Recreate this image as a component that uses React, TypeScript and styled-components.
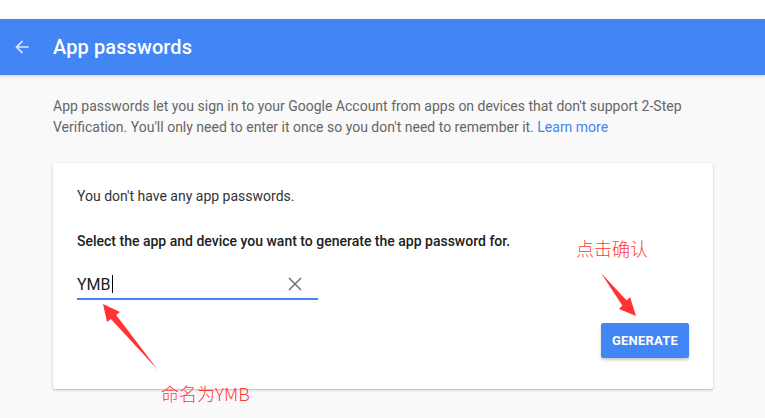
import React from "react";
import styled, { createGlobalStyle } from "styled-components";

const GlobalStyle = createGlobalStyle`
  html, body {
    margin: 0;
    padding: 0;
    background: #f9f9f9;
    font-family: Roboto, "Liberation Sans", Arial, sans-serif;
  }
`;

const Page = styled.div`
  position: relative;
  width: 765px;
  height: 418px;
  overflow: hidden;
  background: #f9f9f9;
`;

const TopStrip = styled.div`
  height: 19px;
  background: #ffffff;
`;

const Header = styled.header`
  height: 56px;
  background: #4285f4;
  display: flex;
  align-items: center;
  box-shadow: 0 1px 3px rgba(0, 0, 0, 0.18);
`;

const BackButton = styled.div`
  width: 53px;
  height: 56px;
  display: flex;
  align-items: center;
  padding-left: 12px;
  box-sizing: border-box;
`;

const Title = styled.h1`
  margin: 0;
  color: #ffffff;
  font-size: 20px;
  font-weight: 500;
  letter-spacing: 0.1px;
`;

const Main = styled.main`
  padding: 21px 52px 0 53px;
`;

const Description = styled.p`
  margin: 0;
  font-size: 14px;
  line-height: 21px;
  color: #666666;
`;

const Link = styled.a`
  color: #4285f4;
  text-decoration: none;
`;

const Card = styled.section`
  margin-top: 25px;
  background: #ffffff;
  height: 226px;
  box-sizing: border-box;
  padding: 23px 24px 0 24px;
  border-radius: 2px;
  box-shadow: 0 1px 3px rgba(0, 0, 0, 0.2), 0 1px 1px rgba(0, 0, 0, 0.08);
  display: flex;
  flex-direction: column;
`;

const Text = styled.div<{ strong?: boolean }>`
  font-size: 14px;
  line-height: 20px;
  color: ${(p) => (p.strong ? "#212121" : "#333333")};
  font-weight: ${(p) => (p.strong ? 500 : 400)};
`;

const Spacer = styled.div<{ h: number }>`
  height: ${(p) => p.h}px;
  flex: none;
`;

const Field = styled.div`
  width: 241px;
  height: 28px;
  display: flex;
  align-items: center;
  border-bottom: 2px solid #4285f4;
`;

const FieldValue = styled.div`
  flex: 1;
  font-size: 16px;
  color: #212121;
  display: flex;
  align-items: center;
`;

const Caret = styled.span`
  display: inline-block;
  width: 1px;
  height: 18px;
  background: #000;
  margin-left: 1px;
`;

const ClearIcon = styled.div`
  width: 24px;
  height: 24px;
  display: flex;
  align-items: center;
  justify-content: center;
  margin-right: 11px;
`;

const Actions = styled.div`
  display: flex;
  justify-content: flex-end;
`;

const Button = styled.button`
  width: 88px;
  height: 35px;
  border: none;
  border-radius: 2px;
  background: #4285f4;
  color: #ffffff;
  font-family: Roboto, "Liberation Sans", Arial, sans-serif;
  font-size: 13px;
  font-weight: 700;
  letter-spacing: 0.2px;
  box-shadow: 0 2px 3px rgba(0, 0, 0, 0.22);
  cursor: pointer;
`;

const Note = styled.div<{ x: number; y: number }>`
  position: absolute;
  left: ${(p) => p.x}px;
  top: ${(p) => p.y}px;
  font-family: "Noto Sans CJK SC", "Liberation Sans", sans-serif;
  font-size: 18px;
  font-weight: 300;
  line-height: 24px;
  color: #ff3b3b;
  white-space: nowrap;
`;

const Overlay = styled.svg`
  position: absolute;
  left: 0;
  top: 0;
  pointer-events: none;
`;

const App = () => {
  return (
    <>
      <GlobalStyle />
      <Page>
        <TopStrip />
        <Header>
          <BackButton>
            <svg width="20" height="20" viewBox="0 0 24 24">
              <path
                d="M20 11H7.83l5.59-5.59L12 4l-8 8 8 8 1.41-1.41L7.83 13H20v-2z"
                fill="rgba(255,255,255,0.8)"
              />
            </svg>
          </BackButton>
          <Title>App passwords</Title>
        </Header>
        <Main>
          <Description>
            App passwords let you sign in to your Google Account from apps on
            devices that don't support 2-Step Verification. You'll only need to
            enter it once so you don't need to remember it.{" "}
            <Link href="#">Learn more</Link>
          </Description>
          <Card>
            <Text>You don't have any app passwords.</Text>
            <Spacer h={25} />
            <Text strong>
              Select the app and device you want to generate the app password
              for.
            </Text>
            <Spacer h={19} />
            <Field>
              <FieldValue>
                YMB
                <Caret />
              </FieldValue>
              <ClearIcon>
                <svg width="14" height="14" viewBox="0 0 14 14">
                  <path
                    d="M1 1L13 13M13 1L1 13"
                    stroke="#757575"
                    strokeWidth="1.6"
                  />
                </svg>
              </ClearIcon>
            </Field>
            <Spacer h={23} />
            <Actions>
              <Button>GENERATE</Button>
            </Actions>
          </Card>
        </Main>
        <Note x={576} y={236}>
          点击确认
        </Note>
        <Note x={161} y={381}>
          命名为YMB
        </Note>
        <Overlay width="765" height="418">
          <polygon
            points="601,273 626.7,300.6 630,297 636,316 619,309 622.3,305.4"
            fill="#ff3333"
          />
          <polygon
            points="158,370 116.1,315 120,312 103,304 107,322 110.9,319"
            fill="#ff3333"
          />
        </Overlay>
      </Page>
    </>
  );
};

export default App;
